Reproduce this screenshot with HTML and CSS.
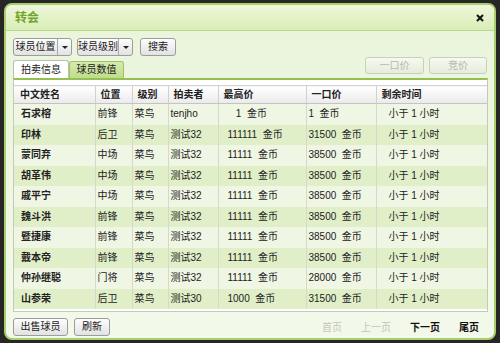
FILE: index.html
```html
<!DOCTYPE html>
<html lang="zh-CN">
<head>
    <meta charset="UTF-8">
    <title>转会</title>
    <link rel="stylesheet" href="styles.css">
</head>
<body>
    <div class="window">
        <div class="titlebar">
            <span class="title">转会</span>
            <svg class="close" width="8" height="8" viewBox="0 0 8 8"><path d="M1 1L7 7M7 1L1 7" stroke="#111" stroke-width="2"/></svg>
        </div>
        <div class="content">
            <div class="toolbar">
                <div class="btn drop" style="width:59px"><span class="drop-text">球员位置</span><span class="drop-arrow"></span></div>
                <div class="btn drop" style="width:56px"><span class="drop-text">球员级别</span><span class="drop-arrow"></span></div>
                <div class="btn search">搜索</div>
            </div>

            <div class="tabrow">
                <div class="tabs">
                    <div class="tab active">拍卖信息</div>
                    <div class="tab">球员数值</div>
                </div>
                <div class="actions">
                    <div class="btn disabled" style="width:59px">一口价</div>
                    <div class="btn disabled" style="width:58px">竞价</div>
                </div>
            </div>

            <div class="panel">
                <table class="grid">
                    <colgroup>
                        <col style="width:81px"><col style="width:37px"><col style="width:36px"><col style="width:50px"><col style="width:88px"><col style="width:70px"><col>
                    </colgroup>
                    <thead>
                        <tr>
                            <th class="c-name">中文姓名</th>
                            <th>位置</th>
                            <th>级别</th>
                            <th>拍卖者</th>
                            <th>最高价</th>
                            <th>一口价</th>
                            <th>剩余时间</th>
                        </tr>
                    </thead>
                    <tbody id="rows"></tbody>
                </table>
            </div>

            <div class="footer">
                <div class="left-btns">
                    <div class="btn" style="width:55px">出售球员</div>
                    <div class="btn" style="width:36px">刷新</div>
                </div>
                <div class="pager">
                    <span class="off">首页</span>
                    <span class="off">上一页</span>
                    <span class="on">下一页</span>
                    <span class="on">尾页</span>
                </div>
            </div>
        </div>
    </div>

    <script>
        const players = [
            ['石求榕', '前锋', '菜鸟', 'tenjho', '&nbsp;&nbsp;&nbsp;1&nbsp;&nbsp;金币', '1&nbsp;&nbsp;金币'],
            ['印林', '后卫', '菜鸟', '测试32', '111111&nbsp;&nbsp;金币', '31500&nbsp;&nbsp;金币'],
            ['蒙同弃', '中场', '菜鸟', '测试32', '11111&nbsp;&nbsp;金币', '38500&nbsp;&nbsp;金币'],
            ['胡革伟', '中场', '菜鸟', '测试32', '11111&nbsp;&nbsp;金币', '38500&nbsp;&nbsp;金币'],
            ['戚平宁', '中场', '菜鸟', '测试32', '11111&nbsp;&nbsp;金币', '38500&nbsp;&nbsp;金币'],
            ['魏斗洪', '前锋', '菜鸟', '测试32', '11111&nbsp;&nbsp;金币', '38500&nbsp;&nbsp;金币'],
            ['暨捷康', '前锋', '菜鸟', '测试32', '11111&nbsp;&nbsp;金币', '38500&nbsp;&nbsp;金币'],
            ['戴本帝', '前锋', '菜鸟', '测试32', '11111&nbsp;&nbsp;金币', '38500&nbsp;&nbsp;金币'],
            ['仲孙继聪', '门将', '菜鸟', '测试32', '11111&nbsp;&nbsp;金币', '28000&nbsp;&nbsp;金币'],
            ['山参荣', '后卫', '菜鸟', '测试30', '1000&nbsp;&nbsp;金币', '31500&nbsp;&nbsp;金币']
        ];

        const tbody = document.getElementById('rows');
        players.forEach((p, i) => {
            const tr = document.createElement('tr');
            tr.className = i % 2 ? 'even' : 'odd';
            tr.innerHTML = `
                <td class="c-name">${p[0]}</td>
                <td>${p[1]}</td>
                <td>${p[2]}</td>
                <td>${p[3]}</td>
                <td class="c-price">${p[4]}</td>
                <td>${p[5]}</td>
                <td class="c-time">小于 1 小时</td>
            `;
            tbody.appendChild(tr);
        });
    </script>
</body>
</html>
```

FILE: styles.css
```css
body {
    margin: 0;
    padding: 3px 4px 0 4px;
    background: #262626;
    font-family: 'Liberation Sans', 'Noto Sans CJK SC', sans-serif;
    font-size: 10px;
    line-height: 14px;
    color: #222;
}

.window {
    width: 492px;
    height: 337px;
    box-sizing: border-box;
    border: 2px solid #a9cf6c;
    border-radius: 8px;
    background: linear-gradient(#eaf4da, #f3f9ea);
    overflow: hidden;
}

.titlebar {
    height: 25px;
    display: flex;
    align-items: center;
    justify-content: space-between;
    padding: 0 10px 0 9px;
    background: linear-gradient(#eef7dc, #d9edb6);
    border-bottom: 1px solid #b9d98f;
}

.title {
    color: #72a52a;
    font-size: 12px;
    font-weight: bold;
}

.close {
    display: block;
}

.content {
    padding: 7px 6px 0 7px;
}

.toolbar {
    display: flex;
    gap: 5px;
    height: 18px;
}

.btn {
    height: 18px;
    box-sizing: border-box;
    border: 1px solid #9c9c9c;
    border-radius: 3px;
    background: linear-gradient(#fdfdfd, #e2e2e2);
    display: flex;
    align-items: center;
    justify-content: center;
    white-space: nowrap;
    color: #222;
}

.drop {
    justify-content: flex-start;
}

.drop-text {
    flex: 1;
    text-align: center;
    border-right: 1px solid #a8a8a8;
    line-height: 16px;
}

.drop-arrow {
    width: 13px;
    height: 100%;
    position: relative;
}

.drop-arrow::after {
    content: '';
    position: absolute;
    left: 4px;
    top: 7px;
    border-left: 3px solid transparent;
    border-right: 3px solid transparent;
    border-top: 3px solid #222;
}

.search {
    width: 36px;
    margin-left: 2px;
}

.tabrow {
    display: flex;
    justify-content: space-between;
    align-items: flex-end;
    height: 22px;
    margin-right: 1px;
}

.tabs {
    display: flex;
    align-items: flex-end;
}

.tab {
    height: 17px;
    width: 55px;
    box-sizing: border-box;
    border: 1px solid #9fc362;
    border-bottom: none;
    border-radius: 3px 3px 0 0;
    background: linear-gradient(#d6ebaf, #bedd8a);
    text-align: center;
    line-height: 16px;
}

.tab.active {
    height: 18px;
    width: 56px;
    border-color: #b8c0b0;
    background: #fff;
    line-height: 17px;
}

.actions {
    display: flex;
    gap: 5px;
    margin-bottom: 4px;
}

.btn.disabled {
    height: 17px;
    border-color: #c7cfbf;
    background: linear-gradient(#f6f9f0, #e6ecdc);
    color: #b4b8b0;
}

.panel {
    border-top: 2px solid #93c050;
    border-left: 1px solid #c3cab9;
    border-right: 1px solid #c3cab9;
    border-bottom: 1px solid #c3cab9;
    background: #fff;
    padding: 5px 0 0 0;
    height: 234px;
    box-sizing: border-box;
}

.grid {
    width: 100%;
    border-collapse: collapse;
    table-layout: fixed;
}

.grid th {
    height: 17px;
    padding: 0 0 0 5px;
    text-align: left;
    font-weight: bold;
    background: linear-gradient(#ffffff, #eaeaea);
    border-top: 1px solid #d4d4d4;
    border-bottom: 1px solid #c4c4c4;
    border-left: 1px solid #d0d0d0;
}

.grid th.c-name {
    padding-left: 6px;
}

.grid td {
    height: 20.5px;
    padding: 0 0 0 2px;
    white-space: nowrap;
    border-left: 1px solid #d3d9cb;
}

.grid th:first-child,
.grid td:first-child {
    border-left: none;
}

.grid td.c-name {
    padding-left: 7px;
    font-weight: bold;
}

.grid td.c-price {
    padding-left: 9px;
}

.grid td.c-time {
    padding-left: 12px;
}

.grid tr.odd td {
    background: #eff6e4;
}

.grid tr.even td {
    background: #e1efc9;
}

.footer {
    display: flex;
    justify-content: space-between;
    align-items: center;
    margin-top: 6px;
}

.left-btns {
    display: flex;
    gap: 6px;
}

.pager {
    display: flex;
    gap: 19px;
    margin-right: 9px;
    padding-top: 2px;
}

.pager .off {
    color: #c2c6bd;
}

.pager .on {
    color: #111;
    font-weight: bold;
}
```
